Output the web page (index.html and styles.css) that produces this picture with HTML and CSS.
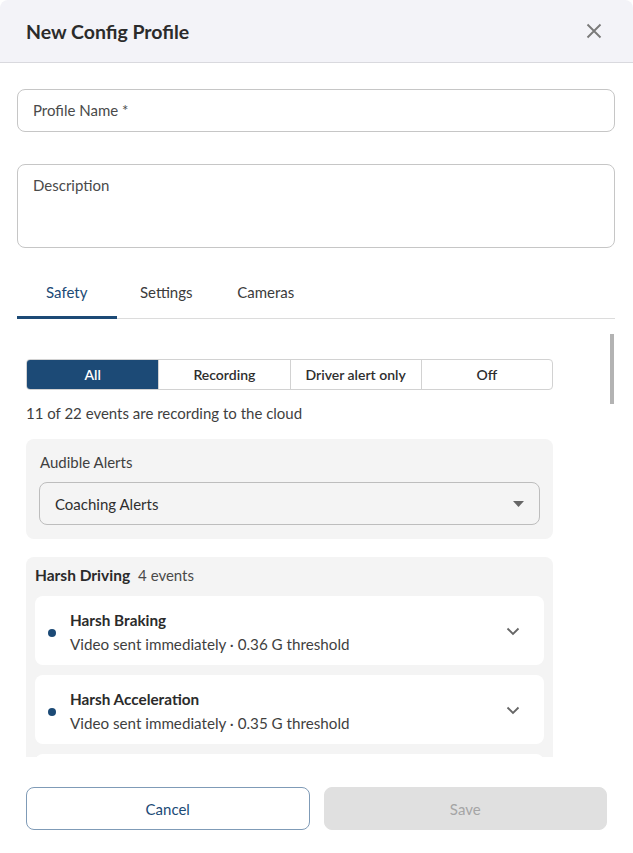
FILE: index.html
```html
<!DOCTYPE html>
<html lang="en">
<head>
<meta charset="utf-8">
<title>New Config Profile</title>
<link rel="stylesheet" href="styles.css">
</head>
<body>
<div class="dialog">
  <header class="dlg-header">
    <h1 class="dlg-title">New Config Profile</h1>
    <button class="close-btn" aria-label="Close">
      <svg width="16" height="16" viewBox="0 0 16 16"><path d="M1.5 1.5 L14.5 14.5 M14.5 1.5 L1.5 14.5" stroke="#7a7a7a" stroke-width="1.9" fill="none"/></svg>
    </button>
  </header>

  <div class="dlg-body">
    <div class="field field-name"><span class="placeholder">Profile Name *</span></div>
    <div class="field field-desc"><span class="placeholder">Description</span></div>

    <nav class="tabs">
      <div class="tab active">Safety</div>
      <div class="tab">Settings</div>
      <div class="tab">Cameras</div>
    </nav>

    <div class="scroll">
      <div class="scroll-content">
        <div class="segmented">
          <div class="seg active">All</div>
          <div class="seg">Recording</div>
          <div class="seg">Driver alert only</div>
          <div class="seg">Off</div>
        </div>
        <p class="summary">11 of 22 events are recording to the cloud</p>

        <section class="panel alerts">
          <div class="panel-label">Audible Alerts</div>
          <div class="select">
            <span>Coaching Alerts</span>
            <svg width="11" height="6" viewBox="0 0 11 6"><path d="M0 0 H11 L5.5 6 Z" fill="#666"/></svg>
          </div>
        </section>

        <section class="panel group">
          <div class="group-head"><span class="group-name">Harsh Driving</span><span class="group-count">4 events</span></div>
          <div class="item">
            <span class="dot"></span>
            <div class="item-text">
              <div class="item-title">Harsh Braking</div>
              <div class="item-sub">Video sent immediately · 0.36 G threshold</div>
            </div>
            <svg class="chev" width="14" height="9" viewBox="0 0 14 9"><path d="M1.5 1.5 L7 7 L12.5 1.5" stroke="#666" stroke-width="1.8" fill="none"/></svg>
          </div>
          <div class="item">
            <span class="dot"></span>
            <div class="item-text">
              <div class="item-title">Harsh Acceleration</div>
              <div class="item-sub">Video sent immediately · 0.35 G threshold</div>
            </div>
            <svg class="chev" width="14" height="9" viewBox="0 0 14 9"><path d="M1.5 1.5 L7 7 L12.5 1.5" stroke="#666" stroke-width="1.8" fill="none"/></svg>
          </div>
          <div class="item item-partial"></div>
        </section>
      </div>
      <div class="thumb"></div>
    </div>
  </div>

  <footer class="dlg-footer">
    <button class="btn btn-cancel">Cancel</button>
    <button class="btn btn-save" disabled>Save</button>
  </footer>
</div>
</body>
</html>
```

FILE: styles.css
```css
* { box-sizing: border-box; }
html, body { margin: 0; padding: 0; background: #ffffff; }
body { font-family: Lato, "Open Sans", "Liberation Sans", sans-serif; color: #2b2b2b; }

.dialog {
  width: 633px;
  height: 853px;
  background: #fff;
  display: flex;
  flex-direction: column;
  overflow: hidden;
}

.dlg-header {
  height: 63px;
  flex: none;
  background: #f3f3f8;
  border-bottom: 1px solid #d9d9de;
  border-radius: 8px 8px 0 0;
  display: flex;
  align-items: center;
  justify-content: space-between;
  padding: 0 31px 0 26px;
}
.dlg-title {
  margin: 0;
  font-size: 19.5px;
  font-weight: 700;
  color: #2b2b2b;
}
.close-btn {
  border: 0;
  background: transparent;
  padding: 0;
  width: 16px;
  height: 16px;
  display: flex;
}

.dlg-body {
  flex: 1;
  display: flex;
  flex-direction: column;
  padding: 26px 18px 0 17px;
  min-height: 0;
}

.field {
  border: 1px solid #c6c6c6;
  border-radius: 8px;
  padding: 0 15px;
  flex: none;
}
.placeholder { font-size: 15px; color: #4a4a4a; }
.field-name { height: 43px; display: flex; align-items: center; padding-bottom: 2px; }
.field-desc { height: 84px; margin-top: 32px; padding-top: 10px; }

.tabs {
  margin-top: 18px;
  height: 53px;
  flex: none;
  display: flex;
  border-bottom: 1px solid #dcdcdc;
}
.tab {
  width: 99.5px;
  display: flex;
  align-items: center;
  justify-content: center;
  padding-top: 1px;
  font-size: 15px;
  color: #3b3b3b;
  border-bottom: 3px solid transparent;
  margin-bottom: -1px;
}
.tab.active { color: #1c4a76; border-bottom-color: #1c4a76; }

.scroll {
  position: relative;
  flex: 1;
  min-height: 0;
  overflow: hidden;
}
.scroll-content {
  width: 536px;
  padding: 40px 0 0 9px;
}
.thumb {
  position: absolute;
  left: 593px;
  top: 15px;
  width: 4px;
  height: 70px;
  background: #b3b3b3;
}

.segmented {
  display: grid;
  grid-template-columns: repeat(4, 1fr);
  height: 31px;
  border: 1px solid #d2d2d2;
  border-radius: 4px;
  overflow: hidden;
}
.seg {
  display: flex;
  align-items: center;
  justify-content: center;
  font-size: 14px;
  font-weight: 600;
  color: #2e2e2e;
  border-left: 1px solid #d2d2d2;
}
.seg:first-child { border-left: 0; }
.seg.active { background: #1c4a76; color: #fff; }

.summary {
  margin: 14px 0 0;
  font-size: 15px;
  line-height: 19px;
  color: #3f3f3f;
}

.panel {
  background: #f4f4f4;
  border-radius: 8px;
}
.alerts {
  margin-top: 16px;
  padding: 13px 13px 14px 13px;
}
.panel-label {
  font-size: 15px;
  line-height: 20px;
  color: #3f3f3f;
  padding-left: 1px;
}
.select {
  margin-top: 10px;
  height: 43px;
  border: 1px solid #bdbdbd;
  border-radius: 8px;
  display: flex;
  align-items: center;
  justify-content: space-between;
  padding: 0 15px 0 15px;
  font-size: 15px;
  color: #2e2e2e;
}

.group {
  margin-top: 18px;
  padding: 9px 9px 12px 9px;
}
.group-head {
  display: flex;
  align-items: baseline;
  gap: 8px;
  height: 20px;
  margin-bottom: 10px;
}
.group-name { font-size: 15.5px; font-weight: 700; color: #2b2b2b; }
.group-count { font-size: 15px; color: #4a4a4a; }

.item {
  background: #fff;
  border-radius: 8px;
  height: 69px;
  margin-bottom: 10px;
  display: flex;
  align-items: center;
  padding: 0 24px 0 13px;
}
.dot {
  width: 8px;
  height: 8px;
  border-radius: 50%;
  background: #1c4a76;
  flex: none;
  margin-top: 4px;
}
.item-text { flex: 1; margin-left: 14px; padding-top: 4px; }
.item-title { font-size: 15.3px; font-weight: 700; color: #2b2b2b; line-height: 22px; }
.item-sub { font-size: 15.2px; color: #3f3f3f; line-height: 26px; }
.chev { flex: none; margin-top: 2px; }

.dlg-footer {
  flex: none;
  display: flex;
  gap: 14px;
  padding: 30px 26px 23px 26px;
}
.btn {
  flex: 1;
  height: 43px;
  border-radius: 8px;
  font-family: inherit;
  font-size: 15px;
}
.btn-cancel {
  background: #fff;
  border: 1px solid #7f9bb7;
  color: #1c4a76;
}
.btn-save {
  background: #e0e0e0;
  border: 1px solid #e0e0e0;
  color: #a5a5a5;
}
```
